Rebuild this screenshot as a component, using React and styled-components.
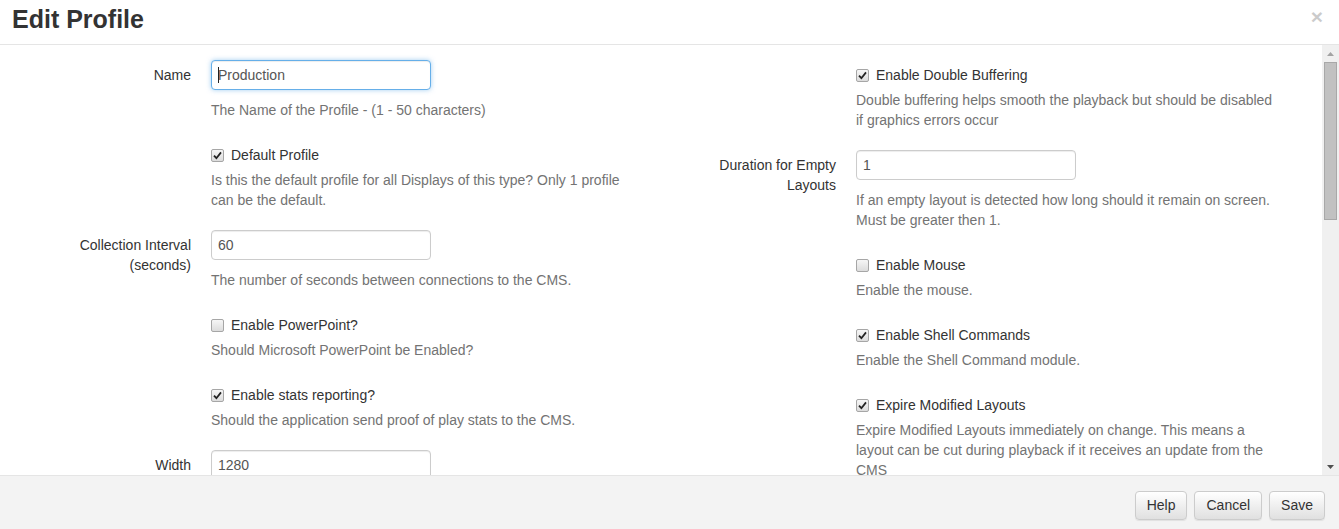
import React from 'react'
import styled, { createGlobalStyle } from 'styled-components'

const GlobalStyle = createGlobalStyle`
  html, body {
    margin: 0;
    padding: 0;
    background: #fff;
  }
  body {
    font-family: "Liberation Sans", Arial, Helvetica, sans-serif;
    font-size: 14px;
    color: #333;
  }
  * { box-sizing: border-box; }
`

const left = [
  { type: 'input', label: 'Name', value: 'Production', focus: true, help: ['The Name of the Profile - (1 - 50 characters)'] },
  { type: 'check', label: 'Default Profile', checked: true, help: ['Is this the default profile for all Displays of this type? Only 1 profile can be the default.'] },
  { type: 'input', label: 'Collection Interval (seconds)', value: '60', help: ['The number of seconds between connections to the CMS.'] },
  { type: 'check', label: 'Enable PowerPoint?', checked: false, help: ['Should Microsoft PowerPoint be Enabled?'] },
  { type: 'check', label: 'Enable stats reporting?', checked: true, help: ['Should the application send proof of play stats to the CMS.'] },
  { type: 'input', label: 'Width', value: '1280', help: ['The Width of the Display Window. 0 means full width.'] },
  { type: 'input', label: 'Height', value: '720', help: ['The Height of the Display Window. 0 means full height.'] },
]

const right = [
  { type: 'check', label: 'Enable Double Buffering', checked: true, help: ['Double buffering helps smooth the playback but should be disabled if graphics errors occur'] },
  { type: 'input', label: 'Duration for Empty Layouts', value: '1', help: ['If an empty layout is detected how long should it remain on screen. Must be greater then 1.'] },
  { type: 'check', label: 'Enable Mouse', checked: false, help: ['Enable the mouse.'] },
  { type: 'check', label: 'Enable Shell Commands', checked: true, help: ['Enable the Shell Command module.'] },
  { type: 'check', label: 'Expire Modified Layouts', checked: true, help: ['Expire Modified Layouts immediately on change. This means a layout can be cut during playback if it receives an update from the CMS'] },
  { type: 'check', label: 'Enable Splash Screen', checked: true, help: ['Show the splash screen on start up.'] },
]

function CheckMark() {
  return (
    <svg width="9" height="9" viewBox="0 0 9 9">
      <path d="M1 4.6 L3.4 7.2 L8 1.4" fill="none" stroke="#222" strokeWidth="1.8" />
    </svg>
  )
}

function Group({ item }) {
  if (item.type === 'check') {
    return (
      <Row>
        <Field>
          <CheckRow>
            <Box>{item.checked && <CheckMark />}</Box>
            <span>{item.label}</span>
          </CheckRow>
          {item.help.map((h, i) => <Help key={i} gap={5}>{h}</Help>)}
        </Field>
      </Row>
    )
  }
  return (
    <Row>
      <Label>{item.label}</Label>
      <Field>
        <InputWrap>
          <Input focus={item.focus ? 1 : 0} defaultValue={item.value} readOnly />
          {item.focus && <Caret />}
        </InputWrap>
        {item.help.map((h, i) => <Help key={i} gap={10}>{h}</Help>)}
      </Field>
    </Row>
  )
}

export default function App() {
  return (
    <>
      <GlobalStyle />
      <Modal>
        <Header>
          <Title>Edit Profile</Title>
          <Close>×</Close>
        </Header>
        <BodyWrap>
          <Body>
            <Column>
              {left.map((item, i) => <Group key={i} item={item} />)}
            </Column>
            <Column>
              {right.map((item, i) => <Group key={i} item={item} />)}
            </Column>
          </Body>
          <Scrollbar>
            <Arrow>
              <svg width="7" height="4" viewBox="0 0 7 4"><path d="M0 4 L3.5 0 L7 4 Z" fill="#a3a3a3" /></svg>
            </Arrow>
            <Thumb />
            <Track />
            <Arrow>
              <svg width="7" height="4" viewBox="0 0 7 4"><path d="M0 0 L3.5 4 L7 0 Z" fill="#505050" /></svg>
            </Arrow>
          </Scrollbar>
        </BodyWrap>
        <Footer>
          <Button>Help</Button>
          <Button>Cancel</Button>
          <Button>Save</Button>
        </Footer>
      </Modal>
    </>
  )
}

const Modal = styled.div`
  width: 1339px;
  height: 529px;
  display: flex;
  flex-direction: column;
  background: #fff;
  overflow: hidden;
`
const Header = styled.div`
  height: 45px;
  flex: none;
  display: flex;
  align-items: center;
  justify-content: space-between;
  padding: 0 16px 4px 12px;
  border-bottom: 1px solid #e5e5e5;
`
const Title = styled.h4`
  margin: 0;
  font-size: 25px;
  font-weight: bold;
  line-height: 1.1;
  color: #333;
`
const Close = styled.span`
  font-size: 21px;
  font-weight: bold;
  line-height: 1;
  color: #000;
  opacity: 0.2;
  margin-top: -8px;
`
const BodyWrap = styled.div`
  flex: 1;
  display: flex;
  min-height: 0;
  overflow: hidden;
`
const Body = styled.div`
  flex: 1;
  display: flex;
  align-items: flex-start;
  padding-top: 15px;
  overflow: hidden;
`
const Column = styled.div`
  width: 645px;
  flex: none;
  display: flex;
  flex-direction: column;
  gap: 20px;
`
const Row = styled.div`
  display: grid;
  grid-template-columns: 191px 425px;
  column-gap: 20px;
  line-height: 20px;
`
const Label = styled.label`
  grid-column: 1;
  text-align: right;
  padding: 5px 0 0 45px;
  color: #333;
`
const Field = styled.div`
  grid-column: 2;
`
const InputWrap = styled.div`
  position: relative;
  width: 220px;
`
const Input = styled.input`
  display: block;
  width: 220px;
  height: 30px;
  padding: 4px 6px;
  font-family: inherit;
  font-size: 14px;
  color: #555;
  background: #fff;
  border: 1px solid ${p => (p.focus ? '#66afe9' : '#ccc')};
  border-radius: 4px;
  outline: none;
  box-shadow: inset 0 1px 1px rgba(0, 0, 0, 0.075)${p => (p.focus ? ', 0 0 5px rgba(102, 175, 233, 0.6)' : '')};
`
const Caret = styled.span`
  position: absolute;
  left: 7px;
  top: 7px;
  width: 1px;
  height: 16px;
  background: #222;
`
const Help = styled.p`
  margin: ${p => p.gap}px 0 0;
  color: #737373;
  line-height: 20px;
`
const CheckRow = styled.div`
  display: flex;
  align-items: center;
  gap: 7px;
  padding-top: 5px;
  color: #333;
`
const Box = styled.span`
  width: 13px;
  height: 13px;
  flex: none;
  display: flex;
  align-items: center;
  justify-content: center;
  border: 1px solid #a6a6a6;
  border-radius: 2px;
  background: linear-gradient(to bottom, #f6f6f6, #dcdcdc);
`
const Scrollbar = styled.div`
  width: 17px;
  flex: none;
  display: flex;
  flex-direction: column;
  align-items: center;
  background: #f0f0f0;
`
const Arrow = styled.div`
  height: 17px;
  width: 17px;
  display: flex;
  align-items: center;
  justify-content: center;
  flex: none;
`
const Thumb = styled.div`
  width: 13px;
  height: 158px;
  background: #c1c1c1;
  border: 1px solid #a8a8a8;
  flex: none;
`
const Track = styled.div`
  flex: 1;
`
const Footer = styled.div`
  height: 54px;
  flex: none;
  display: flex;
  align-items: center;
  justify-content: flex-end;
  gap: 7px;
  padding: 5px 14px 0 0;
  background: #f3f3f3;
  border-top: 1px solid #e5e5e5;
`
const Button = styled.button`
  height: 29px;
  padding: 4px 11px;
  font-family: inherit;
  font-size: 14px;
  line-height: 19px;
  color: #333;
  border: 1px solid #ccc;
  border-radius: 4px;
  background: linear-gradient(to bottom, #fff 0%, #e0e0e0 100%);
  box-shadow: inset 0 1px 0 rgba(255, 255, 255, 0.15), 0 1px 1px rgba(0, 0, 0, 0.075);
`
